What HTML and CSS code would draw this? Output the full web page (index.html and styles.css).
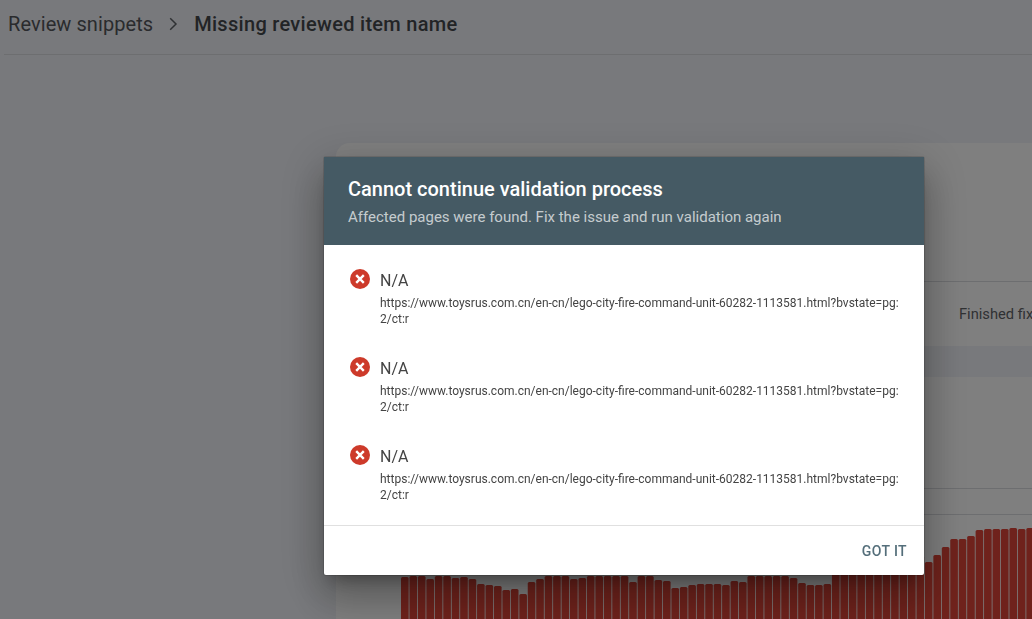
FILE: index.html
```html
<!DOCTYPE html>
<html lang="en">
<head>
<meta charset="utf-8">
<title>Missing reviewed item name</title>
<link rel="stylesheet" href="styles.css">
</head>
<body>
<div class="page">
  <header class="topbar">
    <span class="crumb">Review snippets</span>
    <svg class="chevron" width="24" height="24" viewBox="0 0 24 24"><path d="M8.200 6.200 14 12l-5.800 5.800" fill="none" stroke="currentColor" stroke-width="1.500"/></svg>
    <span class="crumb crumb-current">Missing reviewed item name</span>
  </header>
  <main class="content">
    <section class="card">
      <div class="card-head"></div>
      <div class="status-row"><span class="status-text">Finished fix</span></div>
    </section>
    <div class="band"></div>
    <section class="card chart-card">
      <div class="gridlines"><div class="gridline"></div><div class="gridline"></div></div>
      <svg class="bars" width="634" height="104" viewBox="0 0 634 104">
        <rect x="0" y="62"/><rect x="8.45" y="61"/><rect x="16.9" y="61"/><rect x="25.35" y="64"/><rect x="33.8" y="61"/>
        <rect x="42.25" y="61"/><rect x="50.7" y="63"/><rect x="59.15" y="62"/><rect x="67.6" y="64"/><rect x="76.05" y="69"/>
        <rect x="84.5" y="70"/><rect x="92.95" y="71"/><rect x="101.4" y="75"/><rect x="109.85" y="74"/><rect x="118.3" y="79"/>
        <rect x="126.75" y="67"/><rect x="135.2" y="64"/><rect x="143.65" y="61"/><rect x="152.1" y="61"/><rect x="160.55" y="61"/>
        <rect x="169" y="64"/><rect x="177.45" y="63"/><rect x="185.9" y="61"/><rect x="194.35" y="61"/><rect x="202.8" y="61"/>
        <rect x="211.25" y="61"/><rect x="219.7" y="61"/><rect x="228.15" y="67"/><rect x="236.6" y="61"/><rect x="245.05" y="61"/>
        <rect x="253.5" y="65"/><rect x="261.95" y="66"/><rect x="270.4" y="73"/><rect x="278.85" y="72"/><rect x="287.3" y="70"/>
        <rect x="295.75" y="69"/><rect x="304.2" y="69"/><rect x="312.65" y="69"/><rect x="321.1" y="70"/><rect x="329.55" y="66"/>
        <rect x="338" y="67"/><rect x="346.45" y="61"/><rect x="354.9" y="61"/><rect x="363.35" y="61"/><rect x="371.8" y="61"/>
        <rect x="380.25" y="61"/><rect x="388.7" y="63"/><rect x="397.15" y="68"/><rect x="405.6" y="70"/><rect x="414.05" y="70"/>
        <rect x="422.5" y="69"/><rect x="430.95" y="55"/><rect x="439.4" y="55"/><rect x="447.85" y="55"/><rect x="456.3" y="55"/>
        <rect x="464.75" y="55"/><rect x="473.2" y="55"/><rect x="481.65" y="55"/><rect x="490.1" y="55"/><rect x="498.55" y="55"/>
        <rect x="507" y="55"/><rect x="515.45" y="41"/><rect x="523.9" y="47"/><rect x="532.35" y="40"/><rect x="540.8" y="32"/>
        <rect x="549.25" y="24"/><rect x="557.7" y="24"/><rect x="566.15" y="21"/><rect x="574.6" y="15"/><rect x="583.05" y="14"/>
        <rect x="591.5" y="14"/><rect x="599.95" y="14"/><rect x="608.4" y="13"/><rect x="616.85" y="14"/><rect x="625.3" y="13"/>
      </svg>
    </section>
  </main>
</div>

<div class="scrim">
  <div class="dialog" role="dialog">
    <div class="dialog-head">
      <h1 class="dialog-title">Cannot continue validation process</h1>
      <p class="dialog-sub">Affected pages were found. Fix the issue and run validation again</p>
    </div>
    <ul class="dialog-list">
      <li class="item">
        <svg class="err" width="20" height="20" viewBox="0 0 20 20"><circle cx="10" cy="10" r="10" fill="#cd3a2a"/><path d="M6.200 6.200l7.600 7.600M13.800 6.200l-7.600 7.600" stroke="#fff" stroke-width="2.400"/></svg>
        <div class="item-body">
          <div class="item-name">N/A</div>
          <div class="item-url">https://www.toysrus.com.cn/en-cn/lego-city-fire-command-unit-60282-1113581.html?bvstate=pg:<wbr>2/ct:r</div>
        </div>
      </li>
      <li class="item">
        <svg class="err" width="20" height="20" viewBox="0 0 20 20"><circle cx="10" cy="10" r="10" fill="#cd3a2a"/><path d="M6.200 6.200l7.600 7.600M13.800 6.200l-7.600 7.600" stroke="#fff" stroke-width="2.400"/></svg>
        <div class="item-body">
          <div class="item-name">N/A</div>
          <div class="item-url">https://www.toysrus.com.cn/en-cn/lego-city-fire-command-unit-60282-1113581.html?bvstate=pg:<wbr>2/ct:r</div>
        </div>
      </li>
      <li class="item">
        <svg class="err" width="20" height="20" viewBox="0 0 20 20"><circle cx="10" cy="10" r="10" fill="#cd3a2a"/><path d="M6.200 6.200l7.600 7.600M13.800 6.200l-7.600 7.600" stroke="#fff" stroke-width="2.400"/></svg>
        <div class="item-body">
          <div class="item-name">N/A</div>
          <div class="item-url">https://www.toysrus.com.cn/en-cn/lego-city-fire-command-unit-60282-1113581.html?bvstate=pg:<wbr>2/ct:r</div>
        </div>
      </li>
    </ul>
    <div class="dialog-foot"><button class="got-it">GOT IT</button></div>
  </div>
</div>
</body>
</html>
```
FILE: styles.css
```css
* { box-sizing: border-box; }
html, body { margin: 0; height: 100%; overflow: hidden; }
body { background: #f1f3f8; font-family: Roboto, "Liberation Sans", sans-serif; }

.page { height: 619px; overflow: hidden; }

.topbar {
  height: 55px;
  margin-left: 4px;
  padding: 0 0 6px 4px;
  display: flex;
  align-items: center;
  border-bottom: 1px solid #dadce0;
}
.crumb { font-size: 20px; line-height: 24px; letter-spacing: .07px; color: #54575c; white-space: nowrap; }
.crumb-current { font-weight: 500; letter-spacing: .3px; color: #45484d; }
.chevron { margin: 0 8px 0 9px; color: #5f6368; }

.content { padding: 88px 0 0 336px; }
.card { background: #fff; border-radius: 14px 0 0 0; }
.card-head { height: 139px; border-bottom: 1px solid #dadce0; }
.status-row { height: 64px; display: flex; align-items: center; padding-left: 623px; }
.status-text { font-size: 14.7px; color: #5f6368; white-space: nowrap; }
.band { height: 31px; }
.chart-card { border-radius: 0; padding: 111px 0 0 65px; height: 242px; }
.gridlines { height: 27px; }
.gridline { height: 26px; border-top: 1px solid #dadce0; }
.bars { display: block; }
.bars rect { width: 7.65px; height: 120px; rx: 1.5px; fill: #de4538; }

.scrim {
  position: fixed;
  inset: 0;
  background: rgba(0, 0, 0, .5);
  padding: 157px 0 0 324px;
}
.dialog {
  width: 600px;
  background: #fff;
  border-radius: 2px;
  box-shadow: 0 0 0 1px rgba(0,0,0,.12), 0 11px 15px -7px rgba(0,0,0,.3), 0 24px 38px 3px rgba(0,0,0,.2), 0 9px 46px 8px rgba(0,0,0,.14);
}
.dialog-head { height: 88px; padding: 19px 24px 0; background: #455a64; color: #fff; }
.dialog-title { margin: 0; font-size: 20px; line-height: 26px; font-weight: 500; }
.dialog-sub { margin: 5px 0 0; font-size: 15px; line-height: 20px; font-weight: 400; color: rgba(255,255,255,.7); }

.dialog-list { list-style: none; margin: 0; padding: 22px 24px 12px 26px; display: flex; flex-direction: column; gap: 18px; }
.item { display: flex; height: 70px; }
.err { flex: none; margin: 2px 10px 0 0; }
.item-body { flex: none; width: 520px; padding-top: 1px; }
.item-name { font-size: 16px; line-height: 26px; color: #444; }
.item-url { font-size: 12px; line-height: 16px; margin-top: 1px; color: #444; }

.dialog-foot { height: 50px; border-top: 1px solid #e0e0e0; display: flex; align-items: center; justify-content: flex-end; padding-right: 17px; }
.got-it { border: 0; background: none; padding: 0; font: 500 14px/20px Roboto, sans-serif; letter-spacing: .4px; color: #546e7a; }
```
